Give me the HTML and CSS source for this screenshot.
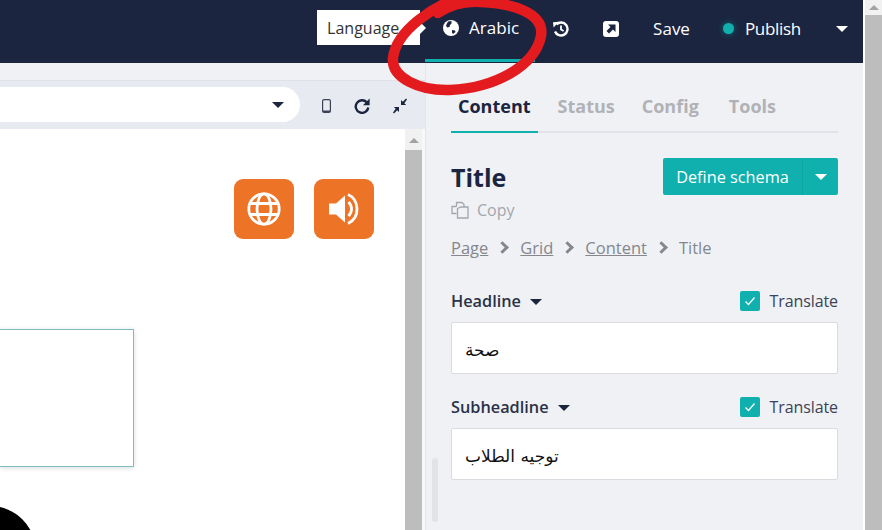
FILE: index.html
```html
<!DOCTYPE html>
<html lang="en">

<head>
    <meta charset="UTF-8">
    <meta name="viewport" content="width=device-width, initial-scale=1.0">
    <title>Title - Content</title>
    <link rel="stylesheet" href="styles.css">
</head>

<body>
    <div class="main">
        <header class="topbar">
            <div class="lang-tip">Language</div>
            <a class="lang-tab">
                <svg class="icon-globe" viewBox="0 0 16 16">
                    <circle cx="8" cy="8" r="8" fill="#fff" />
                    <path d="M5 1.5 8.500 1 8.500 3.500 7 5 6.500 7 4 7.500 3 5.500zM9 10l3 .5 .5 1.500-2.500 2-1-1.500z" fill="#1b2540" />
                </svg>
                Arabic
            </a>
            <svg class="icon-history" viewBox="0 0 16 16">
                <path d="M3.4 3.4A6.5 6.5 0 1 1 2 10.5" fill="none" stroke="#fff" stroke-width="2.4" />
                <path d="M0 1.2 5.8 .8 .6 6.6z" fill="#fff" />
                <path d="M8 4.6V8.4L10.6 10" fill="none" stroke="#fff" stroke-width="1.8" />
            </svg>
            <svg class="icon-open" viewBox="0 0 16 16">
                <rect width="16" height="16" rx="3" fill="#fff" />
                <path d="M5 3.5h7.500v7.500L10 8.500 6 12.500 3.500 10 7.500 6z" fill="#1b2540" />
            </svg>
            <span class="save">Save</span>
            <span class="status-dot"></span>
            <span class="publish">Publish</span>
            <span class="caret caret-white"></span>
        </header>

        <div class="workspace">
            <section class="preview">
                <div class="toolbar">
                    <div class="url-pill"><span class="caret caret-dark"></span></div>
                    <svg class="tool tool-mobile" viewBox="0 0 9 14">
                        <rect x=".6" y=".6" width="7.800" height="12.800" rx="1.500" fill="none" stroke="#3a4258" stroke-width="1.200" />
                        <path d="M1 11.500h7v1.500H1z" fill="#3a4258" />
                    </svg>
                    <svg class="tool tool-redo" viewBox="0 0 16 16">
                        <path d="M12.600 4.200A6.300 6.300 0 1 0 14.300 9.500" fill="none" stroke="#1b2540" stroke-width="2.400" />
                        <path d="M15.600 .6V7.300H9z" fill="#1b2540" />
                    </svg>
                    <svg class="tool tool-compress" viewBox="0 0 16 16">
                        <path d="M15 1.600 14 .5 10.800 3.700 9 2V7H14.200L12.300 5.200zM1 14.400 2 15.500 5.200 12.300 7 14V9H1.800L3.700 10.800z" fill="#1b2540" />
                    </svg>
                </div>
                <div class="frame-row">
                    <div class="frame">
                        <div class="frame-buttons">
                            <div class="orange-btn">
                                <svg viewBox="0 0 34 34" width="34" height="34" fill="none" stroke="#fff" stroke-width="2.800">
                                    <circle cx="17" cy="17" r="15.200" />
                                    <ellipse cx="17" cy="17" rx="7" ry="15.200" />
                                    <path d="M3 11.500H31M3 22.500H31" />
                                </svg>
                            </div>
                            <div class="orange-btn">
                                <svg viewBox="0 0 32 32" width="32" height="32" fill="#fff">
                                    <path d="M1 10.500H8L17 2.500V29.500L8 21.500H1z" />
                                    <path d="M20.500 9C24.500 13 24.500 19 20.500 23" fill="none" stroke="#fff" stroke-width="2.800" />
                                    <path d="M20 1.500C31 6 33 24 20 30.500" fill="none" stroke="#fff" stroke-width="2.800" />
                                </svg>
                            </div>
                        </div>
                        <div class="frame-box"></div>
                        <div class="black-circle"></div>
                    </div>
                    <div class="frame-scroll">
                        <div class="scroll-arrow"></div>
                        <div class="scroll-thumb"></div>
                    </div>
                </div>
            </section>

            <aside class="panel">
                <div class="panel-thumb"></div>
                <nav class="tabs">
                    <a class="tab active">Content</a>
                    <a class="tab">Status</a>
                    <a class="tab">Config</a>
                    <a class="tab">Tools</a>
                </nav>

                <div class="title-row">
                    <div>
                        <h2 class="title">Title</h2>
                        <div class="copy">
                            <svg viewBox="0 0 18 18" width="18" height="18" fill="none" stroke="#a3a6ad" stroke-width="1.300">
                                <path d="M5.500 5.500V1.500H11L13 3.500V6M5.500 12.500H1V5.500H5.500" />
                                <path d="M6.500 7.500L10 6H17V17H6.500z" />
                            </svg>
                            Copy
                        </div>
                    </div>
                    <div class="split-btn">
                        <span class="split-main">Define schema</span>
                        <span class="split-side"><span class="caret caret-white"></span></span>
                    </div>
                </div>

                <div class="crumbs">
                    <a>Page</a><span class="chev"></span>
                    <a>Grid</a><span class="chev"></span>
                    <a>Content</a><span class="chev"></span>
                    <span>Title</span>
                </div>

                <div class="field">
                    <div class="field-head">
                        <label class="field-label">Headline <span class="caret caret-dark"></span></label>
                        <div class="translate"><span class="checkbox"><svg viewBox="0 0 20 20" width="20" height="20"><path d="M5.500 10.500 8.500 13.500 14.500 6.500" fill="none" stroke="#fff" stroke-width="1.300" /></svg></span>Translate</div>
                    </div>
                    <input class="text-input" type="text" value="صحة" readonly>
                </div>

                <div class="field">
                    <div class="field-head">
                        <label class="field-label">Subheadline <span class="caret caret-dark"></span></label>
                        <div class="translate"><span class="checkbox"><svg viewBox="0 0 20 20" width="20" height="20"><path d="M5.500 10.500 8.500 13.500 14.500 6.500" fill="none" stroke="#fff" stroke-width="1.300" /></svg></span>Translate</div>
                    </div>
                    <input class="text-input" type="text" value="توجيه الطلاب" readonly>
                </div>
            </aside>
        </div>
    </div>

    <div class="page-scroll">
        <div class="scroll-arrow"></div>
        <div class="scroll-thumb"></div>
    </div>

    <!-- red marker scribble drawn over the screenshot -->
    <svg class="scribble" viewBox="0 0 882 530">
        <path d="M472 -6C432 4 396 32 393 58C391 78 420 91 450 90C495 88 535 66 541 36C545 13 512 3 480 2C465 1 450 5 438 13" fill="none" stroke="#e31b1f" stroke-width="10.500" stroke-linecap="round" />
    </svg>
</body>

</html>
```
FILE: styles.css
```css
* {
    box-sizing: border-box;
}

body {
    font-family: "Open Sans", "Noto Sans", sans-serif;
    background-color: #eff1f5;
    color: #1b2540;
    display: flex;
    height: 100vh;
    margin: 0;
    overflow: hidden;
}

.main {
    width: 863px;
    display: flex;
    flex-direction: column;
}

/* top bar */
.topbar {
    height: 63px;
    flex: none;
    background-color: #1b2540;
    color: white;
    font-size: 17px;
    display: flex;
    align-items: center;
    justify-content: flex-end;
    padding: 0 15px 6px 0;
}

.lang-tip {
    width: 103px;
    height: 35px;
    margin-top: -2px;
    padding-left: 10px;
    background-color: white;
    color: #333;
    font-size: 16px;
    line-height: 37px;
    position: relative;
}

.lang-tip::after {
    content: "";
    position: absolute;
    left: 100%;
    top: 12px;
    border-left: 6px solid white;
    border-top: 6px solid transparent;
    border-bottom: 6px solid transparent;
}

.lang-tab {
    width: 110px;
    height: 62px;
    align-self: flex-start;
    margin-left: 5px;
    padding: 0 0 4px 18px;
    border-bottom: 3px solid #0fb0ae;
    display: flex;
    align-items: center;
    gap: 10px;
}

.icon-globe {
    width: 16px;
    height: 16px;
}

.icon-history {
    width: 16px;
    height: 16px;
    margin-left: 18px;
}

.icon-open {
    width: 16px;
    height: 16px;
    margin-left: 34px;
}

.save {
    margin-left: 34px;
}

.status-dot {
    width: 11px;
    height: 11px;
    margin-left: 33px;
    border-radius: 50%;
    background-color: #0fb0ae;
    box-shadow: 0 0 6px rgba(15, 176, 174, 0.5);
}

.publish {
    margin-left: 11px;
    letter-spacing: -0.3px;
}

.topbar .caret {
    margin-left: 35px;
}

.caret {
    display: inline-block;
    width: 0;
    height: 0;
    border-left: 6px solid transparent;
    border-right: 6px solid transparent;
    border-top: 6px solid #1b2540;
}

.caret-white {
    border-top-color: white;
}

.caret-dark {
    border-top-color: #1b2540;
}

/* preview side */
.workspace {
    flex: 1;
    display: flex;
    min-height: 0;
}

.preview {
    width: 426px;
    flex: none;
    padding-top: 17px;
    border-right: 1px solid #e4e6eb;
    display: flex;
    flex-direction: column;
}

.toolbar {
    height: 49px;
    flex: none;
    background-color: #e7eaf0;
    border-top: 1px solid #dfe1e6;
    display: flex;
    align-items: center;
}

.url-pill {
    width: 300px;
    height: 35px;
    margin-top: -1px;
    padding-right: 16px;
    background-color: white;
    border-radius: 0 18px 18px 0;
    display: flex;
    align-items: center;
    justify-content: flex-end;
}

.tool {
    margin-top: 2px;
}

.tool-mobile {
    width: 9px;
    height: 14px;
    margin-left: 22px;
}

.tool-redo {
    width: 16px;
    height: 16px;
    margin-left: 23px;
}

.tool-compress {
    width: 16px;
    height: 16px;
    margin-left: 22px;
}

.frame-row {
    flex: 1;
    min-height: 0;
    display: flex;
    padding-right: 3px;
    background-color: #f7f8fa;
}

.frame {
    width: 405px;
    flex: none;
    background-color: white;
    position: relative;
    overflow: hidden;
}

.frame-buttons {
    padding: 50px 31px 0 0;
    display: flex;
    justify-content: flex-end;
    gap: 20px;
}

.orange-btn {
    width: 60px;
    height: 60px;
    background-color: #ed7327;
    border-radius: 9px;
    display: flex;
    align-items: center;
    justify-content: center;
}

.frame-box {
    width: 134px;
    height: 138px;
    margin-top: 90px;
    border: 1px solid #7dbdbb;
    border-left: none;
    box-shadow: 0 1px 5px rgba(0, 0, 0, 0.14);
}

.black-circle {
    position: absolute;
    left: -56px;
    top: 377px;
    width: 92px;
    height: 92px;
    border-radius: 50%;
    background-color: black;
}

.frame-scroll,
.page-scroll {
    width: 17px;
    flex: none;
    background-color: #f1f1f1;
    display: flex;
    flex-direction: column;
}

.page-scroll {
    width: 19px;
    border-left: 2px solid white;
}

.scroll-arrow {
    height: 15px;
    flex: none;
    position: relative;
}

.frame-scroll .scroll-arrow {
    height: 21px;
}

.scroll-arrow::after {
    content: "";
    position: absolute;
    left: 4px;
    top: 5px;
    border-left: 5px solid transparent;
    border-right: 5px solid transparent;
    border-bottom: 5px solid #a3a3a3;
}

.frame-scroll .scroll-arrow::after {
    top: 9px;
}

.scroll-thumb {
    flex: 1;
    background-color: #bdbdbd;
}

/* right panel */
.panel {
    flex: 1;
    padding: 0 25px;
    position: relative;
}

.panel-thumb {
    position: absolute;
    left: 6px;
    top: 395px;
    width: 6px;
    height: 64px;
    border-radius: 3px;
    background-color: #e2e3e7;
}

.tabs {
    height: 70px;
    border-bottom: 2px solid #e1e3e8;
    display: flex;
    align-items: flex-end;
    gap: 13px;
}

.tab {
    padding: 0 7px 13px;
    margin-bottom: -2px;
    border-bottom: 2px solid transparent;
    font-size: 18px;
    font-weight: 700;
    line-height: 24px;
    color: #b1b2b6;
}

.tab:last-child {
    margin-left: 3px;
}

.tab.active {
    color: #1b2540;
    border-bottom-color: #0fb0ae;
}

.title-row {
    margin-top: 25px;
    display: flex;
    justify-content: space-between;
    align-items: flex-start;
}

.title {
    margin: 2px 0 0;
    font-size: 25px;
    line-height: 34px;
    font-weight: 700;
}

.copy {
    margin-top: 6px;
    height: 20px;
    display: flex;
    align-items: center;
    gap: 8px;
    font-size: 16px;
    color: #a3a6ad;
}

.split-btn {
    width: 175px;
    height: 37px;
    display: flex;
    background-color: #0fb0ae;
    color: white;
    border-radius: 2px;
    font-size: 16.3px;
    line-height: 39px;
}

.split-main {
    width: 140px;
    text-align: center;
    border-right: 1px solid #0ea5a3;
}

.split-side {
    flex: 1;
    display: flex;
    align-items: center;
    justify-content: center;
}

.crumbs {
    margin-top: 16px;
    height: 22px;
    display: flex;
    align-items: center;
    font-size: 16.5px;
    color: #85878d;
}

.crumbs a {
    text-decoration: underline;
}

.chev {
    width: 9px;
    height: 9px;
    margin: 0 13px 0 10px;
    border-top: 3px solid #85878d;
    border-right: 3px solid #85878d;
    transform: rotate(45deg);
}

.field {
    margin-top: 23px;
}

.crumbs+.field {
    margin-top: 33px;
}

.field-head {
    height: 20px;
    margin-bottom: 11px;
    display: flex;
    justify-content: space-between;
    align-items: center;
}

.field-label {
    font-size: 16.3px;
    font-weight: 600;
    color: #2b3147;
}

.field-label .caret {
    margin-left: 5px;
    vertical-align: 2px;
}

.translate {
    display: flex;
    align-items: center;
    font-size: 16px;
    letter-spacing: -0.1px;
    color: #3c4257;
}

.checkbox {
    width: 20px;
    height: 20px;
    margin-right: 10px;
    background-color: #0fb0ae;
    border-radius: 2px;
    display: flex;
}

.text-input {
    display: block;
    width: 100%;
    height: 52px;
    padding: 3px 13px 0;
    background-color: white;
    border: 1px solid #d9dbe0;
    border-radius: 2px;
    color: #111;
    font-family: "DejaVu Sans", sans-serif;
    font-size: 17px;
}

.scribble {
    position: absolute;
    left: 0;
    top: 0;
    width: 882px;
    height: 530px;
    pointer-events: none;
}
```
